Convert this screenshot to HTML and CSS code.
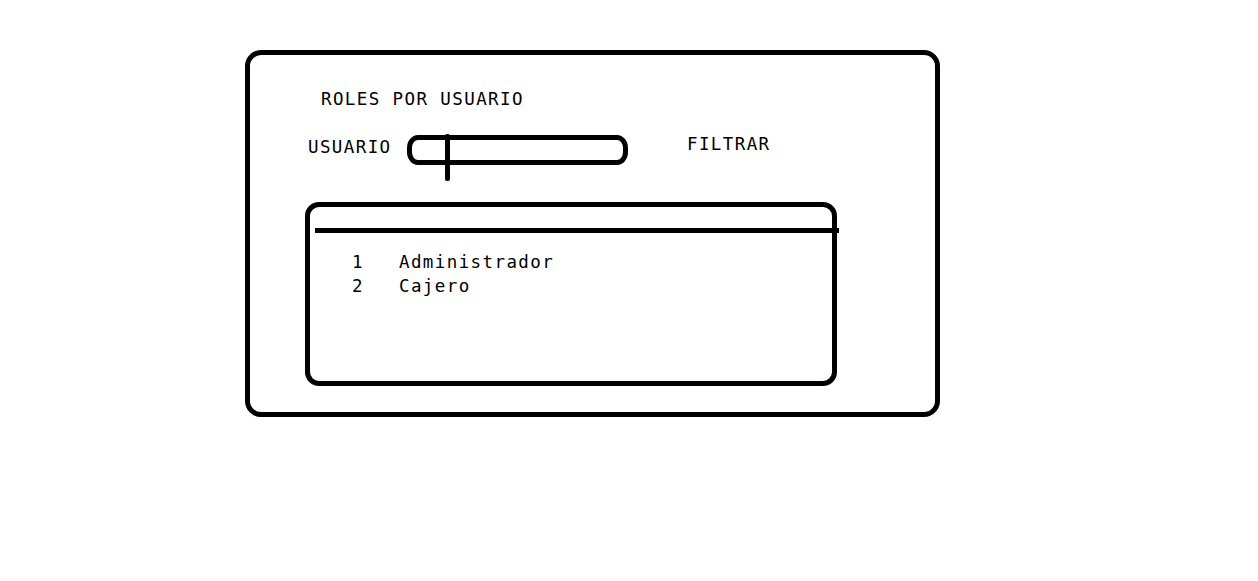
FILE: index.html
```html
<!DOCTYPE html>
<html lang="es">
<head>
<meta charset="utf-8">
<title>Roles por usuario</title>
<link rel="stylesheet" href="styles.css">
</head>
<body>
  <div class="frame">
    <div class="title">ROLES POR USUARIO</div>
    <div class="filter-row">
      <label class="label">USUARIO</label>
      <div class="input"><span class="caret"></span></div>
      <div class="filter-btn">FILTRAR</div>
    </div>
    <div class="list">
      <div class="list-head"></div>
      <div class="list-row"><span class="num">1</span><span class="name">Administrador</span></div>
      <div class="list-row"><span class="num">2</span><span class="name">Cajero</span></div>
    </div>
  </div>
</body>
</html>
```

FILE: styles.css
```css
* { box-sizing: border-box; }
html, body { margin: 0; padding: 0; background: #fff; }
body {
  font-family: "DejaVu Sans Mono", "Liberation Mono", monospace;
  font-size: 17.5px;
  letter-spacing: 1.4px;
  color: #000;
}
.frame {
  margin: 50px 0 0 245px;
  width: 695px;
  height: 367px;
  border: 5px solid #000;
  border-radius: 16px;
  display: flex;
  flex-direction: column;
  align-items: flex-start;
}
.title {
  margin: 34px 0 0 71px;
  line-height: 20px;
}
.filter-row {
  margin-top: 25px;
  display: flex;
  align-items: flex-start;
}
.label {
  margin: 3px 0 0 58px;
  width: 99px;
  line-height: 20px;
}
.input {
  position: relative;
  margin-top: 1px;
  width: 221px;
  height: 30px;
  border: 5px solid #000;
  border-radius: 11px / 13px;
}
.caret {
  position: absolute;
  left: 33px;
  top: -6px;
  width: 5px;
  height: 47px;
  background: #000;
  border-radius: 2px;
}
.filter-btn {
  margin-left: 59px;
  line-height: 20px;
}
.list {
  margin: 37px 0 0 55px;
  width: 532px;
  height: 184px;
  border: 5px solid #000;
  border-radius: 14px;
}
.list-head {
  margin: 21px -7px 0 5px;
  height: 5px;
  background: #000;
}
.list-head + .list-row { margin-top: 17px; }
.list-row {
  display: flex;
  line-height: 24px;
  padding-left: 42px;
}
.num { width: 47px; }
```
